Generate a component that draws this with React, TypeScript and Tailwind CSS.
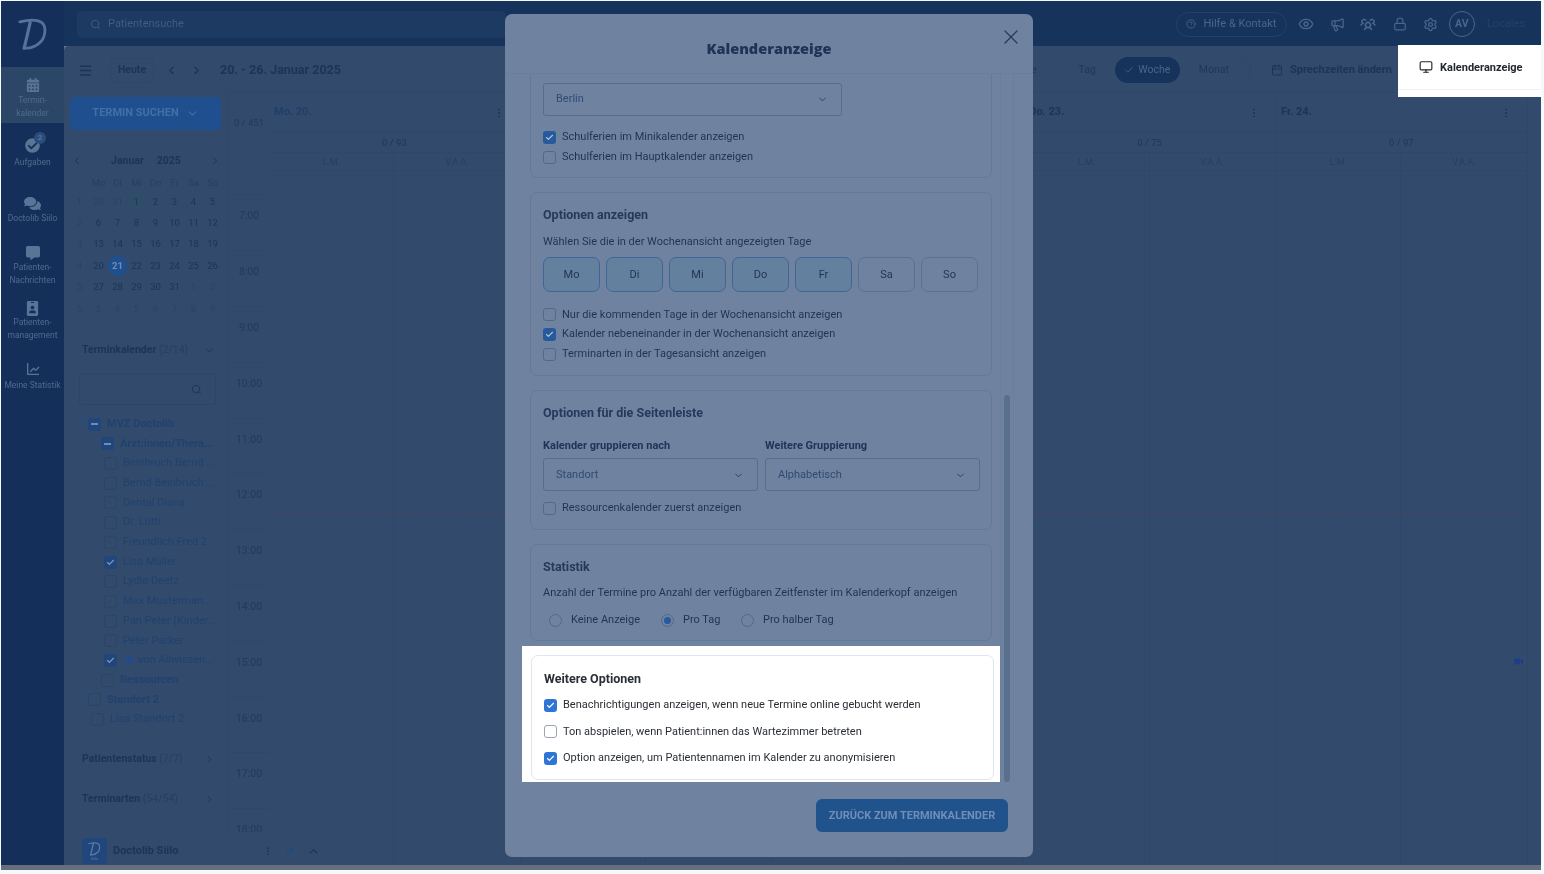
import React from "react";
import {
  Menu, ChevronLeft, ChevronRight, ChevronDown, ChevronUp, Search, Check, Eye, Megaphone, Lock, Settings,
  CircleHelp, Calendar, Monitor, X, EllipsisVertical, Minimize2,
} from "lucide-react";
import { FaCalendarAlt, FaCheckCircle, FaComments, FaCommentAlt, FaIdBadge, FaVideo } from "react-icons/fa";
import { BiLineChart } from "react-icons/bi";
import { PiUsersThreeBold } from "react-icons/pi";

const font = { fontFamily: "Roboto, 'Liberation Sans', sans-serif" };

function Logo({ className }: { className?: string }) {
  return (
    <svg viewBox="0 0 32 34" className={className} fill="none" stroke="currentColor" strokeLinecap="round">
      <path d="M2 3.5 C10 1.5 20 1 25 4 C31 8 29 20 24 25 C19 30 13 32 6.5 31.5" strokeWidth="3" />
      <path d="M13 4 C11 13 9 22 6.5 31.5" strokeWidth="3.4" />
    </svg>
  );
}

function RailItem({ icon, label, active, h, pt, gap }: { icon: React.ReactNode; label: React.ReactNode; active?: boolean; h: string; pt: string; gap: string }) {
  return (
    <div className={`flex flex-col items-center text-center text-[8.5px] leading-[12.8px] text-[#4f6a8e] ${h} ${pt} ${active ? "bg-[#2c4668]" : ""}`}>
      <div className="h-[15px] flex items-center justify-center text-[#5a7497]">{icon}</div>
      <div className={gap}>{label}</div>
    </div>
  );
}

function Rail() {
  return (
    <div className="w-[63px] shrink-0 bg-[#14305a] flex flex-col">
      <div className="h-[66px] flex items-start justify-center pt-[17px] text-[#5372a0]"><Logo className="w-[30px] h-[33px]" /></div>
      <RailItem active h="h-[56px]" pt="pt-[10px]" gap="mt-[2px]" icon={<FaCalendarAlt size={14} />} label={<>Termin-<br />kalender</>} />
      <RailItem h="h-[59px]" pt="pt-[15px]" gap="mt-[3px]" icon={
        <div className="relative"><FaCheckCircle size={15} />
          <span className="absolute -top-[6px] -right-[6px] w-[12px] h-[12px] rounded-full bg-[#2a4d7c] text-[8px] leading-[12px] text-[#5a7497] text-center font-bold">2</span></div>
      } label="Aufgaben" />
      <RailItem h="h-[52px]" pt="pt-[14px]" gap="mt-[1px]" icon={<FaComments size={17} />} label="Doctolib Siilo" />
      <RailItem h="h-[57px]" pt="pt-[11px]" gap="mt-[1px]" icon={<FaCommentAlt size={14} />} label={<>Patienten-<br />Nachrichten</>} />
      <RailItem h="h-[47px]" pt="pt-[10px]" gap="mt-0" icon={<FaIdBadge size={15} />} label={<>Patienten-<br />management</>} />
      <RailItem h="h-[50px]" pt="pt-[23px]" gap="mt-[3px]" icon={<BiLineChart size={16} />} label="Meine Statistik" />
      <div className="flex-1" />
    </div>
  );
}

function TopBar() {
  return (
    <div className="h-[45px] bg-[#16335b] flex items-center pl-[13px] pr-[16px] pt-[1px] text-[#49668c]">
      <div className="w-[429px] h-[27px] rounded-[5px] bg-[#1c3a62] flex items-center pl-[13px] gap-[7px] text-[11px] text-[#3f5d86]">
        <Search size={11} /><span>Patientensuche</span>
      </div>
      <div className="flex-1" />
      <div className="w-[111px] h-[25px] rounded-full border border-[#24416a] flex items-center justify-center gap-[7px] text-[11px]">
        <CircleHelp size={10} /><span>Hilfe &amp; Kontakt</span>
      </div>
      <Eye size={16} className="ml-[11px]" />
      <Megaphone size={15} className="ml-[16px]" />
      <PiUsersThreeBold size={16} className="ml-[15px]" />
      <Lock size={14} className="ml-[17px]" />
      <Settings size={15} className="ml-[16px]" />
      <div className="ml-[11px] w-[26px] h-[26px] rounded-full border border-[#49668c] flex items-center justify-center text-[10.5px] font-bold">AV</div>
      <span className="ml-[12px] text-[11px] text-[#24416a]">Locales</span>
    </div>
  );
}

const weeks = [
  ["1", "30", "31", "1", "2", "3", "4", "5"],
  ["2", "6", "7", "8", "9", "10", "11", "12"],
  ["3", "13", "14", "15", "16", "17", "18", "19"],
  ["4", "20", "21", "22", "23", "24", "25", "26"],
  ["5", "27", "28", "29", "30", "31", "1", "2"],
  ["6", "3", "4", "5", "6", "7", "8", "9"],
];

function MiniCalendar() {
  return (
    <div className="mt-[22px] ml-[6px] w-[152px]">
      <div className="h-[18px] flex items-center justify-between text-[#1c3458] text-[10.5px] font-bold px-[1px]">
        <ChevronLeft size={12} />
        <span className="flex gap-[13px]"><span>Januar</span><span>2025</span></span>
        <ChevronRight size={12} />
      </div>
      <div className="grid grid-cols-8 mt-[4px] text-[9.5px] text-center">
        {["", "Mo", "Di", "Mi", "Do", "Fr", "Sa", "So"].map((d, i) => (
          <div key={i} className="h-[17px] leading-[17px] text-[#263f62]">{d}</div>
        ))}
        {weeks.map((w, r) =>
          w.map((d, c) => {
            const muted = c === 0 || (r === 0 && c < 3) || (r === 4 && c > 5) || r === 5;
            const sel = r === 3 && c === 2;
            const today = r === 0 && c === 3;
            return (
              <div key={`${r}-${c}`} className="h-[21.4px] flex items-center justify-center">
                <span className={`w-[20px] h-[20px] rounded-full flex items-center justify-center ${sel ? "bg-[#1f4f8f] text-[#6f8cb5] font-bold" : today ? "bg-[#2f4d68] text-[#1c3458]" : muted ? "text-[#2a4467]" : "text-[#1c3458]"}`}>{d}</span>
              </div>
            );
          })
        )}
      </div>
    </div>
  );
}

function TreeBox({ state }: { state?: "check" | "dash" }) {
  return (
    <span className={`w-[13px] h-[13px] shrink-0 rounded-[3px] flex items-center justify-center ${state ? "bg-[#20467c]" : "border border-[#2a4567]"}`}>
      {state === "check" && <Check size={9} strokeWidth={3} className="text-[#7f9ac0]" />}
      {state === "dash" && <span className="w-[7px] h-[1.5px] bg-[#6f8cb5]" />}
    </span>
  );
}

function TreeRow({ ml, label, state, bold, caret, video }: { ml: string; label: string; state?: "check" | "dash"; bold?: boolean; caret?: "down" | "right"; video?: boolean }) {
  return (
    <div className={`h-[19.7px] flex items-center relative text-[11px] text-[#21426f] whitespace-nowrap ${ml} ${bold ? "font-bold" : ""}`}>
      {caret === "down" && <span className="absolute -left-[8px] top-[5px] w-0 h-0 border-x-[3px] border-x-transparent border-t-[4px] border-t-[#294e7f]" />}
      {caret === "right" && <span className="absolute -left-[7px] top-[4px] w-0 h-0 border-y-[3px] border-y-transparent border-l-[4px] border-l-[#294e7f]" />}
      <TreeBox state={state} />
      {video && <FaVideo size={8} className="ml-[9px] text-[#1f4a96]" />}
      <span className={video ? "ml-[4px]" : "ml-[6px]"}>{label}</span>
    </div>
  );
}

function CollapseHead({ t, n, open, className }: { t: string; n: string; open?: boolean; className: string }) {
  return (
    <div className={`flex items-center justify-between ml-[18px] w-[133px] text-[#1c3458] ${className}`}>
      <span className="text-[10.5px] font-bold whitespace-nowrap">{t} <span className="font-normal text-[#263f62]">{n}</span></span>
      {open ? <ChevronDown size={11} /> : <ChevronRight size={11} />}
    </div>
  );
}

function Sidebar() {
  return (
    <div className="w-[165px] shrink-0 border-r border-[#2f4869] flex flex-col overflow-hidden">
      <div className="mt-[5px] ml-[6px] w-[151px] h-[33px] rounded-[5px] bg-[#1f4f8f] flex items-center justify-center gap-[7px] text-[11px] font-bold text-[#436fa6]">
        TERMIN SUCHEN <ChevronDown size={13} />
      </div>
      <MiniCalendar />
      <CollapseHead t="Terminkalender" n="(2/14)" open className="mt-[23px] h-[16px]" />
      <div className="mt-[15px] ml-[15px] w-[137px] h-[32px] rounded-[3px] border border-[#2d4566] flex items-center justify-end pr-[13px] text-[#1c3458]">
        <Search size={11} />
      </div>
      <div className="mt-[9px] ml-[24px]">
        <TreeRow ml="" label="MVZ Doctolib" state="dash" bold caret="down" />
        <TreeRow ml="ml-[13px]" label="Ärzt:innen/Thera..." state="dash" bold caret="down" />
        <TreeRow ml="ml-[16px]" label="Beinbruch Bernd ..." />
        <TreeRow ml="ml-[16px]" label="Bernd Beinbruch ..." />
        <TreeRow ml="ml-[16px]" label="Dental Diana" />
        <TreeRow ml="ml-[16px]" label="Dr. Lütti" />
        <TreeRow ml="ml-[16px]" label="Freundlich Fred 2" />
        <TreeRow ml="ml-[16px]" label="Lisa Müller" state="check" />
        <TreeRow ml="ml-[16px]" label="Lydia Deetz" />
        <TreeRow ml="ml-[16px]" label="Max Musterman..." />
        <TreeRow ml="ml-[16px]" label="Pan Peter (Kinder..." />
        <TreeRow ml="ml-[16px]" label="Peter Parker" />
        <TreeRow ml="ml-[16px]" label="von Allwissen..." state="check" video />
        <TreeRow ml="ml-[13px]" label="Ressourcen" bold caret="right" />
        <TreeRow ml="" label="Standort 2" bold caret="down" />
        <TreeRow ml="ml-[3px]" label="Lisa Standort 2" />
      </div>
      <CollapseHead t="Patientenstatus" n="(7/7)" className="mt-[22px] h-[16px]" />
      <CollapseHead t="Terminarten" n="(54/54)" className="mt-[24px] h-[16px]" />
    </div>
  );
}

const hours = ["7:00", "8:00", "9:00", "10:00", "11:00", "12:00", "13:00", "14:00", "15:00", "16:00", "17:00", "18:00"];

function DayColumn({ label, count, showVideo, labelBlue, hidden }: { label?: string; count?: string; showVideo?: boolean; labelBlue?: boolean; hidden?: boolean }) {
  return (
    <div className="w-[251.75px] shrink-0 border-r border-[#2f4869] flex flex-col relative">
      <div className="h-[39px] flex items-center justify-between pl-[5px] pr-[15px] pt-[1px] border-b border-[#2f4869]">
        <span className={`text-[11px] font-bold ${labelBlue ? "text-[#213f69]" : "text-[#1c3458]"}`}>{label}</span>
        <EllipsisVertical size={12} className="text-[#1c3458]" />
      </div>
      <div className="h-[21px] flex items-center justify-center pt-[2px] text-[9.5px] text-[#1f3759] border-b border-[#2f4869]">{count}</div>
      <div className="h-[18px] grid grid-cols-2 text-[9px] text-center leading-[19px] text-[#263f62] border-b border-[#2f4869]">
        <span className="border-r border-[#2f4869]">{hidden ? "" : "L.M."}</span><span>{hidden ? "" : "V.A.A."}</span>
      </div>
      <div className="flex-1 grid grid-cols-2">
        <div className="border-r border-[#2f4869]" />
        <div />
      </div>
      {showVideo && <FaVideo size={9} className="absolute left-[238px] top-[564px] text-[#1f3f85]" />}
    </div>
  );
}

function CalendarGrid() {
  return (
    <div className="flex-1 relative flex overflow-hidden border-t border-[#2f4869]">
      <div className="w-[40px] shrink-0 text-[#223a5d] flex flex-col">
        <div className="h-[60px] flex items-end pb-[20px] pl-[5px] text-[9.5px]">0 / 451</div>
        <div className="h-[49px] border-b border-[#2f4869]" />
        {hours.map((h) => (
          <div key={h} className="h-[55.8px] shrink-0 border-b border-[#2f4869] text-[10.5px] text-center pt-[13px]">{h}</div>
        ))}
      </div>
      <div className="flex">
        <DayColumn label="Mo. 20." count="0 / 93" labelBlue />
        <DayColumn hidden />
        <DayColumn hidden />
        <DayColumn label="Do. 23." count="0 / 75" />
        <DayColumn label="Fr. 24." count="0 / 97" showVideo />
      </div>
      <div className="absolute left-[40px] right-[16px] top-[420px] border-t border-dashed border-[#523c5c]" />
    </div>
  );
}

function Toolbar() {
  return (
    <div className="h-[46px] shrink-0 flex items-center pt-[2px] text-[#1c3458]">
      <Menu size={15} strokeWidth={2.4} className="ml-[14px]" />
      <div className="ml-[17px] w-[44px] h-[25px] rounded-[5px] border border-[#2f4869] flex items-center justify-center text-[10.5px] font-bold">Heute</div>
      <ChevronLeft size={13} className="ml-[11px]" />
      <ChevronRight size={13} className="ml-[12px]" />
      <span className="ml-[17px] text-[12.5px] font-bold">20. - 26. Januar 2025</span>
      <div className="flex-1" />
      <div className="flex items-center h-[26px] text-[10.5px] text-[#1f3759] border-r border-[#2f4869] rounded-r-full pr-[21px]">
        <span className="mr-[42px]">Liste</span>
        <span className="mr-[19px]">Tag</span>
        <span className="w-[65px] h-[26px] rounded-full bg-[#16335b] text-[#49668c] flex items-center justify-center gap-[4px]"><Check size={10} />Woche</span>
        <span className="ml-[19px]">Monat</span>
      </div>
      <Calendar size={12} className="ml-[20px]" />
      <span className="ml-[7px] text-[11px] font-bold whitespace-nowrap">Sprechzeiten ändern</span>
      <div className="w-[149px]" />
    </div>
  );
}

function ModalBox({ on }: { on?: boolean }) {
  return (
    <span className={`w-[13px] h-[13px] shrink-0 rounded-[3px] flex items-center justify-center ${on ? "bg-[#275a9c]" : "border border-[#53698a]"}`}>
      {on && <Check size={9} strokeWidth={3} className="text-[#b4c3d9]" />}
    </span>
  );
}

function ModalCheck({ on, label, h = "h-[19.7px]" }: { on?: boolean; label: string; h?: string }) {
  return (
    <div className={`${h} flex items-center gap-[6px] text-[11px] text-[#1f3354] whitespace-nowrap`}>
      <ModalBox on={on} /><span>{label}</span>
    </div>
  );
}

function ModalSelect({ value, w }: { value: string; w: string }) {
  return (
    <div className={`${w} h-[33px] rounded-[3px] border border-[#566d90] flex items-center justify-between pl-[12px] pr-[13px] pt-[1px] text-[11px] text-[#2f4b75]`}>
      <span>{value}</span><ChevronDown size={11} className="text-[#25395a]" />
    </div>
  );
}

function Card({ children, className }: { children: React.ReactNode; className?: string }) {
  return <div className={`shrink-0 rounded-[7px] border border-[#64799a] px-[12px] ${className ?? ""}`}>{children}</div>;
}

function CardTitle({ children }: { children: React.ReactNode }) {
  return <div className="h-[16px] leading-[16px] text-[12.5px] font-bold text-[#25395a]">{children}</div>;
}

function Radio({ on, label, className }: { on?: boolean; label: string; className: string }) {
  return (
    <div className={`flex items-center gap-[9px] text-[11px] text-[#1f3354] ${className}`}>
      <span className="w-[13px] h-[13px] rounded-full border border-[#53698a] flex items-center justify-center">
        {on && <span className="w-[7px] h-[7px] rounded-full bg-[#275a9c]" />}
      </span>
      <span>{label}</span>
    </div>
  );
}

function HighlightRow({ on, label }: { on?: boolean; label: string }) {
  return (
    <div className="h-[26.5px] flex items-center gap-[6px] text-[11px] text-[#2a2f36] whitespace-nowrap">
      <span className={`w-[13px] h-[13px] shrink-0 rounded-[3px] flex items-center justify-center ${on ? "bg-[#2f75d6]" : "border border-[#9aa6b6]"}`}>
        {on && <Check size={9} strokeWidth={3} className="text-white" />}
      </span>
      <span>{label}</span>
    </div>
  );
}

function Modal() {
  return (
    <div className="absolute left-[504px] top-[13px] w-[528px] h-[843px] rounded-[7px] bg-[#6f83a1] flex flex-col">
      <div className="h-[59px] shrink-0 relative flex items-center justify-center pt-[11px]">
        <span className="text-[14.5px] font-extrabold text-[#1e3355]" style={{ fontFamily: "'Open Sans', Roboto, sans-serif" }}>Kalenderanzeige</span>
        <X size={24} strokeWidth={1.3} className="absolute right-[10px] top-[11px] text-[#25395a]" />
      </div>
      <div className="h-[709px] flex overflow-hidden border-t border-[#6b7f9d]">
        <div className="ml-[25px] w-[462px] shrink-0 flex flex-col justify-end">
          <Card className="h-[130px] rounded-t-none flex flex-col justify-end pb-[10px]">
            <ModalSelect value="Berlin" w="w-[299px]" />
            <div className="mt-[12px]">
              <ModalCheck on label="Schulferien im Minikalender anzeigen" />
              <ModalCheck label="Schulferien im Hauptkalender anzeigen" />
            </div>
          </Card>
          <Card className="mt-[14px] h-[184px] pt-[14px]">
            <CardTitle>Optionen anzeigen</CardTitle>
            <div className="mt-[10px] h-[16px] leading-[17px] text-[11px] text-[#1f3354]">Wählen Sie die in der Wochenansicht angezeigten Tage</div>
            <div className="mt-[8px] flex gap-[6px]">
              {["Mo", "Di", "Mi", "Do", "Fr", "Sa", "So"].map((d, i) => (
                <div key={d} className={`w-[57px] h-[35px] rounded-[7px] border flex items-center justify-center pt-[1px] text-[11px] text-[#1f3354] ${i < 5 ? "bg-[#64809f] border-[#3f6696]" : "border-[#5b7193]"}`}>{d}</div>
              ))}
            </div>
            <div className="mt-[13px]">
              <ModalCheck label="Nur die kommenden Tage in der Wochenansicht anzeigen" />
              <ModalCheck on label="Kalender nebeneinander in der Wochenansicht anzeigen" />
              <ModalCheck label="Terminarten in der Tagesansicht anzeigen" />
            </div>
          </Card>
          <Card className="mt-[14px] h-[140px] pt-[14px]">
            <CardTitle>Optionen für die Seitenleiste</CardTitle>
            <div className="mt-[16px] flex gap-[7px]">
              <div className="w-[215px] shrink-0">
                <div className="h-[16px] leading-[17px] text-[11px] font-bold text-[#1e3355]">Kalender gruppieren nach</div>
                <div className="mt-[5px]"><ModalSelect value="Standort" w="w-[215px]" /></div>
              </div>
              <div className="w-[215px] shrink-0">
                <div className="h-[16px] leading-[17px] text-[11px] font-bold text-[#1e3355]">Weitere Gruppierung</div>
                <div className="mt-[5px]"><ModalSelect value="Alphabetisch" w="w-[215px]" /></div>
              </div>
            </div>
            <div className="mt-[6px]"><ModalCheck label="Ressourcenkalender zuerst anzeigen" h="h-[22px]" /></div>
          </Card>
          <Card className="mt-[14px] h-[97px] pt-[14px]">
            <CardTitle>Statistik</CardTitle>
            <div className="mt-[9px] h-[16px] leading-[17px] text-[11px] text-[#1f3354] whitespace-nowrap">Anzahl der Termine pro Anzahl der verfügbaren Zeitfenster im Kalenderkopf anzeigen</div>
            <div className="mt-[9px] h-[22px] flex items-center pl-[6px]">
              <Radio label="Keine Anzeige" className="w-[112px]" />
              <Radio on label="Pro Tag" className="w-[80px]" />
              <Radio label="Pro halber Tag" className="" />
            </div>
          </Card>
          <div className="relative z-10 mt-[5px] -mx-[8px] shrink-0 h-[136px] bg-white pt-[9px] pl-[9px] pr-[7px]">
            <div className="w-[463px] h-[125px] rounded-[7px] border border-[#dfe6ef] px-[12px] pt-[15px]">
              <div className="h-[16px] leading-[16px] text-[12.5px] font-bold text-[#2a2f36]">Weitere Optionen</div>
              <div className="mt-[5px]">
                <HighlightRow on label="Benachrichtigungen anzeigen, wenn neue Termine online gebucht werden" />
                <HighlightRow label="Ton abspielen, wenn Patient:innen das Wartezimmer betreten" />
                <HighlightRow on label="Option anzeigen, um Patientennamen im Kalender zu anonymisieren" />
              </div>
            </div>
          </div>
        </div>
        <div className="ml-[8px] w-[14px] shrink-0 border-x border-[#6b7f9d] flex flex-col justify-end px-[3px]">
          <div className="h-[387px] rounded-full bg-[#596f8e]" />
        </div>
      </div>
      <div className="flex justify-end pr-[25px] pt-[17px]">
        <div className="w-[192px] h-[33px] rounded-[6px] bg-[#20528c] flex items-center justify-center pt-[1px] text-[11px] font-bold text-[#6f8eb8] whitespace-nowrap">ZURÜCK ZUM TERMINKALENDER</div>
      </div>
    </div>
  );
}

function Siilo() {
  return (
    <div className="absolute left-[74px] top-[831px] w-[254px] h-[33px] bg-[#324a6c] flex items-start pt-[6px] pl-[7px] text-[#1c3458]">
      <div className="w-[25px] h-[26px] rounded-[4px] bg-[#20467c] flex flex-col items-center justify-center text-[#5a7aa6]">
        <Logo className="w-[13px] h-[14px]" />
        <span className="text-[4px] leading-[5px]">Siilo</span>
      </div>
      <div className="h-[26px] flex items-center">
        <span className="ml-[6px] text-[11px] font-bold">Doctolib Siilo</span>
        <EllipsisVertical size={10} className="ml-[85px]" />
        <Minimize2 size={11} className="ml-[12px] text-[#1f4a86]" />
        <ChevronUp size={13} className="ml-[11px]" />
      </div>
    </div>
  );
}

function KalenderTip() {
  return (
    <div className="absolute left-[1397px] top-[44px] w-[143px] h-[52px] bg-white">
      <div className="h-[45px] border-b border-[#eef1f5] flex items-start pt-[15px] pl-[21px] gap-[7px] text-[#24282e]">
        <Monitor size={14} /><span className="text-[11px] font-bold whitespace-nowrap">Kalenderanzeige</span>
      </div>
    </div>
  );
}

export default function App() {
  return (
    <div className="w-[1544px] h-[874px] bg-[#f6f8fb] overflow-hidden pl-[1px] pt-[1px]" style={font}>
      <div className="relative w-[1540px] h-[869px] bg-[#666f7d] blur-[0.35px]">
        <div className="h-[864px] flex overflow-hidden">
          <Rail />
          <div className="flex-1 flex flex-col min-w-0">
            <TopBar />
            <div className="flex-1 bg-[#324a6c] flex flex-col min-h-0 rounded-tl-[5px]">
              <Toolbar />
              <div className="flex-1 flex min-h-0">
                <Sidebar />
                <CalendarGrid />
              </div>
            </div>
          </div>
        </div>
        <Siilo />
        <Modal />
        <KalenderTip />
      </div>
    </div>
  );
}
